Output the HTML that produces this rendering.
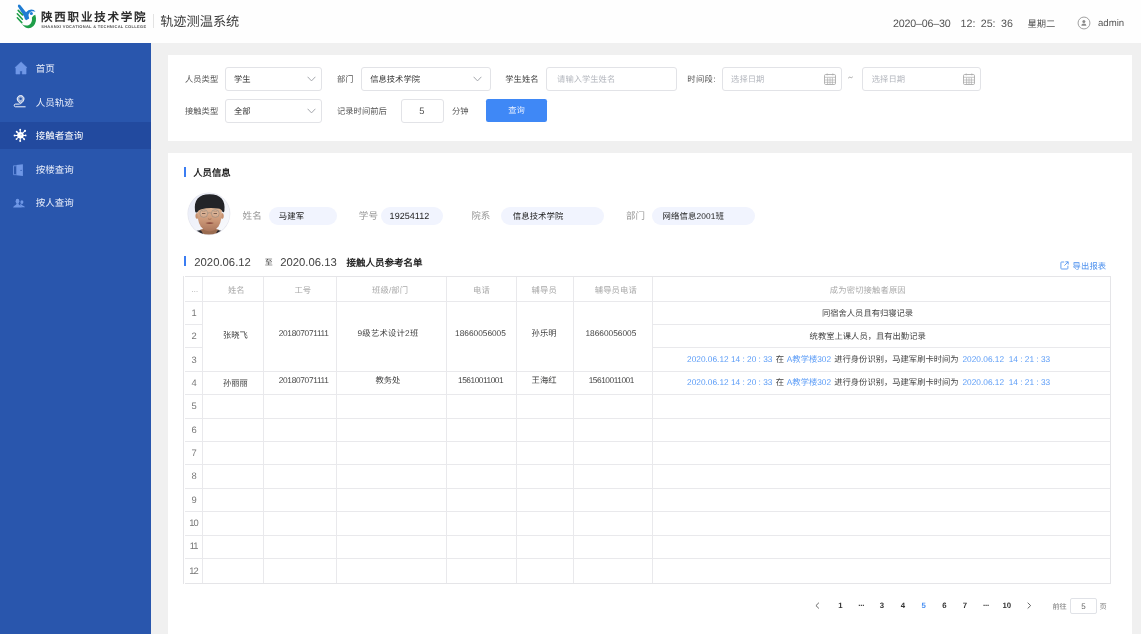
<!DOCTYPE html>
<html lang="zh-CN">
<head>
<meta charset="utf-8">
<title>轨迹测温系统</title>
<style>
*{box-sizing:border-box;margin:0;padding:0}
html,body{width:1141px;height:634px;overflow:hidden;background:#f0f0f0;font-family:"Liberation Sans",sans-serif;color:#333;text-rendering:geometricPrecision}
.abs,.abs *{position:absolute}
.t{position:absolute;white-space:nowrap;line-height:1;}
/* header */
#hd{position:absolute;left:0;top:0;width:1141px;height:43px;background:#fefefe}
/* sidebar */
#sb{position:absolute;left:0;top:43px;width:151px;height:591px;background:#2956ad}
#sb .act{position:absolute;left:0;top:79px;width:151px;height:27.3px;background:#224a9f}
#sb .t{font-size:9.5px;color:#e9eefa;left:35.8px}
/* panels */
.panel{position:absolute;background:#fff;will-change:transform}
#hd,#sb{will-change:transform}
.lbl{font-size:8.3px;color:#555}
.inp{position:absolute;height:24px;border:1px solid #e2e3e7;border-radius:3px;background:#fff}
.inp .t{font-size:8.3px;top:7.3px}
.ph{color:#b5b8bf}
.chev{position:absolute;top:8.6px;width:9px;height:6px}
.cal{position:absolute;top:5.4px;width:12px;height:12px}
.gl{font-size:9.5px;color:#999;letter-spacing:.1px}
.pill{position:absolute;height:18.6px;border-radius:9.3px;background:#f1f4fe}
.pill .t{font-size:8.4px;color:#222;top:5px;letter-spacing:.1px}
.bar{position:absolute;width:2px;height:10.6px;background:#3b7df2}
/* table */
#tb{position:absolute;border:1px solid #e5e5e8}
#tb i{position:absolute;background:#e9e9ec;display:block}
.th{font-size:8.3px;color:#aaa;letter-spacing:.15px}
.td{font-size:8.3px;color:#444;letter-spacing:0}
.num{font-size:9.4px;color:#777}
.lk{color:#5b9cf7}
.pg{font-size:7.8px;font-weight:bold;color:#333}
</style>
</head>
<body>
<!-- HEADER -->
<div id="hd">
  <svg id="logo" style="position:absolute;left:12px;top:0;width:50px;height:36px" viewBox="0 0 50 36">
<path d="M6.8 4.5 Q7.6 4.4 8.2 5.1 L14 12.3 Q17 8.6 21.8 10 L23.5 11.7 Q19.6 10.5 17.7 12.5 Q16.1 14.2 16.6 16 L17.2 18.4 L14.2 20.3 Q12.3 18.6 12.1 16.4 L5.9 6.5 Q5.6 5 6.8 4.5Z" fill="#1f7cd3"/>
<circle cx="19.35" cy="13.5" r="1.55" fill="#1f7cd3"/>
<path d="M6.2 10.4L10.5 14.9M5.3 13.8L10.4 19.2M5.3 17.8L9.8 22.6" stroke="#1e9e48" stroke-width="1.55" stroke-linecap="round" fill="none"/>
<path d="M9.8 23.9 Q13.6 26.6 17 24.9 Q20.6 22.8 19.9 17.4 Q21 15.3 23.3 14.8 Q25.4 21.6 21.5 25.9 Q15.6 31.2 9.8 23.9Z" fill="#1e9e48"/>
</svg>
  <div class="t" style="left:41px;top:12.8px;font-size:11.5px;font-weight:bold;color:#2b2b2b;letter-spacing:1.8px">陕西职业技术学院</div>
  <div class="t" style="left:41.2px;top:24.8px;font-size:4px;font-weight:bold;color:#555;letter-spacing:.3px;transform-origin:0 0">SHAANXI VOCATIONAL &amp; TECHNICAL COLLEGE</div>
  <div style="position:absolute;left:152.6px;top:14px;width:1px;height:14px;background:#e3e3e3"></div>
  <div class="t" style="left:160.2px;top:14.6px;font-size:13.2px;color:#3d3d3d">轨迹测温系统</div>
  <div class="t" style="left:893px;top:18.6px;font-size:10.7px;color:#555;letter-spacing:-.2px">2020–06–30</div>
  <div class="t" style="left:960.5px;top:18.6px;font-size:10.7px;color:#555;word-spacing:2.4px">12: 25: 36</div>
  <div class="t" style="left:1027.5px;top:19.6px;font-size:9.3px;color:#555">星期二</div>
  <svg id="usr" style="position:absolute;left:1076.6px;top:16px;width:14px;height:14px" viewBox="0 0 14 14">
<circle cx="7" cy="7" r="5.95" fill="none" stroke="#8f8f8f" stroke-width=".85"/>
<circle cx="6.85" cy="5.5" r="1.5" fill="#8a8a8a"/>
<path d="M4.3 9.8 Q4.3 7.6 6.85 7.6 Q9.4 7.6 9.4 9.8Z" fill="#8a8a8a"/>
</svg>
  <div class="t" style="left:1098px;top:18.8px;font-size:9.6px;color:#555">admin</div>
</div>

<!-- SIDEBAR -->
<div id="sb">
  <div class="act"></div>
<svg style="position:absolute;left:0;top:0;width:40px;height:180px" viewBox="0 43 40 180">
<!-- home -->
<path d="M21.1 61.9 L27.1 67.7 L26.1 67.7 L26.1 74.1 L22.2 74.1 L22.2 70.9 L19.9 70.9 L19.9 74.1 L15.9 74.1 L15.9 67.7 L14.9 67.7 Z" fill="#6f97e6" stroke="#6f97e6" stroke-width=".5" stroke-linejoin="round"/>
<!-- location -->
<path d="M20.6 95.6 C22.6 95.6 24 97 24 98.9 C24 100.8 22.1 102.5 20.6 103.7 C19.1 102.5 17.2 100.8 17.2 98.9 C17.2 97 18.6 95.6 20.6 95.6Z" fill="rgba(255,255,255,.55)" stroke="#fff" stroke-width="1"/>
<circle cx="20.6" cy="98.7" r="1.25" fill="#2956ad"/>
<path d="M19.3 104.1 H15.5 C13.8 104.1 13.8 106.8 15.5 106.8 H25.2" fill="none" stroke="#fff" stroke-width=".95" stroke-linecap="round"/>
<!-- virus -->
<g fill="#fff" stroke="#fff">
<circle cx="20.4" cy="135.2" r="3.25" stroke="none"/>
<path d="M20.4 135.2L20.2 129.8M20.4 135.2L24.8 131.1M20.4 135.2L25.5 135.4M20.4 135.2L24.1 139.2M20.4 135.2L20.2 140.9M20.4 135.2L16.6 139M20.4 135.2L14.7 135.6M20.4 135.2L16.8 131.8" stroke-width="1.05" fill="none"/>
<circle cx="20.2" cy="129.7" r=".95" stroke="none"/><circle cx="25" cy="130.9" r="1.05" stroke="none"/><circle cx="25.6" cy="135.4" r=".9" stroke="none"/><circle cx="24.2" cy="139.3" r=".95" stroke="none"/><circle cx="20.2" cy="140.9" r="1" stroke="none"/><circle cx="16.5" cy="139.1" r=".95" stroke="none"/><circle cx="14.6" cy="135.6" r="1" stroke="none"/><circle cx="16.7" cy="131.7" r=".95" stroke="none"/>
</g>
<circle cx="21.1" cy="134.7" r=".55" fill="#5577bb"/>
<!-- door -->
<path d="M16.3 165.8 H13.5 V174.7 H16.3" fill="none" stroke="#6f97e6" stroke-width=".8"/>
<path d="M16.3 164.9 L22.9 164.2 V176.1 L16.3 175.3Z" fill="#6f97e6"/>
<circle cx="21.1" cy="170.4" r=".6" fill="#2956ad"/>
<!-- people -->
<g fill="#6f97e6">
<ellipse cx="21.9" cy="202.1" rx="1.5" ry="1.95"/>
<path d="M21 203.6 Q21.2 205 22.6 205.5 Q24.6 206 25 207.3 H21.6 Q21 205.6 19.8 205.2Z"/>
<ellipse cx="17.5" cy="201.2" rx="1.85" ry="2.45"/>
<path d="M16.5 203.2 H18.5 Q18.4 204.8 19.8 205.3 Q21.6 205.9 21.8 207.6 H13.1 Q13.4 205.9 15.2 205.3 Q16.6 204.8 16.5 203.2Z"/>
</g>
</svg>
  <div class="t" style="top:22.0px">首页</div>
  <div class="t" style="top:55.6px">人员轨迹</div>
  <div class="t" style="top:89.2px;color:#fff">接触者查询</div>
  <div class="t" style="top:122.9px">按楼查询</div>
  <div class="t" style="top:156.4px">按人查询</div>
</div>

<!-- FILTER PANEL -->
<div class="panel" style="left:168px;top:55.3px;width:963.6px;height:85.7px">
<div class="t lbl" style="left:17.0px;top:19.9px;">人员类型</div>
<div class="inp" style="left:57.3px;top:11.9px;width:96.6px"><div class="t" style="left:7.6px;color:#333">学生</div><svg class="chev" style="left:80.5px" viewBox="0 0 9 6"><path d="M0.6 0.8 L4.5 4.9 L8.4 0.8" fill="none" stroke="#9a9da3" stroke-width="0.9"/></svg></div>
<div class="t lbl" style="left:169.0px;top:19.9px;">部门</div>
<div class="inp" style="left:193.0px;top:11.9px;width:130.0px"><div class="t" style="left:8.2px;color:#333">信息技术学院</div><svg class="chev" style="left:111px" viewBox="0 0 9 6"><path d="M0.6 0.8 L4.5 4.9 L8.4 0.8" fill="none" stroke="#9a9da3" stroke-width="0.9"/></svg></div>
<div class="t lbl" style="left:337.3px;top:19.9px;color:#444">学生姓名</div>
<div class="inp" style="left:378.3px;top:11.9px;width:130.4px"><div class="t ph" style="left:9.8px">请输入学生姓名</div></div>
<div class="t lbl" style="left:519.3px;top:19.9px;"><span style="letter-spacing:.35px">时间段:</span></div>
<div class="inp" style="left:553.5px;top:11.9px;width:120.0px"><div class="t ph" style="left:8.6px">选择日期</div><svg class="cal" style="left:101.6px" viewBox="0 0 12 12"><rect x="0.5" y="1.5" width="11" height="10" rx="1.2" fill="none" stroke="#a2a2a2" stroke-width="0.8"/><path d="M0.5 4.3H11.5M3.2 0.4V2.4M8.8 0.4V2.4M0.8 7H11.2M0.8 9.3H11.2M3.6 4.5V11.3M6 4.5V11.3M8.4 4.5V11.3" fill="none" stroke="#a8a8a8" stroke-width="0.65"/></svg></div>
<svg style="position:absolute;left:679.6px;top:21.1px;width:5px;height:3px" viewBox="0 0 5 3"><path d="M.4 1.9 Q1.3 .5 2.4 1.4 T4.5 1.1" fill="none" stroke="#8a8a8a" stroke-width=".75" stroke-linecap="round"/></svg>
<div class="inp" style="left:693.7px;top:11.9px;width:119.2px"><div class="t ph" style="left:9.1px">选择日期</div><svg class="cal" style="left:100.3px" viewBox="0 0 12 12"><rect x="0.5" y="1.5" width="11" height="10" rx="1.2" fill="none" stroke="#a2a2a2" stroke-width="0.8"/><path d="M0.5 4.3H11.5M3.2 0.4V2.4M8.8 0.4V2.4M0.8 7H11.2M0.8 9.3H11.2M3.6 4.5V11.3M6 4.5V11.3M8.4 4.5V11.3" fill="none" stroke="#a8a8a8" stroke-width="0.65"/></svg></div>
<div class="t lbl" style="left:17.0px;top:52.0px;">接触类型</div>
<div class="inp" style="left:57.3px;top:43.9px;width:96.6px"><div class="t" style="left:7.6px;color:#333">全部</div><svg class="chev" style="left:80.5px" viewBox="0 0 9 6"><path d="M0.6 0.8 L4.5 4.9 L8.4 0.8" fill="none" stroke="#9a9da3" stroke-width="0.9"/></svg></div>
<div class="t lbl" style="left:169.0px;top:52.0px;">记录时间前后</div>
<div class="inp" style="left:233.2px;top:43.9px;width:43.0px"><div class="t" style="left:17px;top:6.2px;font-size:9.4px;color:#555">5</div></div>
<div class="t lbl" style="left:284.0px;top:52.0px;">分钟</div>
<div style="position:absolute;left:318.2px;top:43.9px;width:60.4px;height:22.8px;border-radius:2.2px;background:#3f88f6"><div class="t" style="left:22px;top:7px;font-size:8.3px;color:#dfeaff">查询</div></div>
</div>

<!-- MAIN PANEL -->
<div class="panel" style="left:168px;top:153px;width:963.6px;height:481px">
<div class="bar" style="left:15.6px;top:13.8px"></div>
<div class="t " style="left:25.2px;top:15.4px;font-size:9.4px;font-weight:bold;color:#222;letter-spacing:.0px">人员信息</div>
<svg id="av" style="position:absolute;left:12px;top:33px;width:60px;height:56px" viewBox="0 0 60 56">
<defs><clipPath id="avc"><circle cx="28.9" cy="27.8" r="20.8"/></clipPath>
<linearGradient id="skin" x1="0" y1="0" x2="0" y2="1"><stop offset="0" stop-color="#e0b999"/><stop offset=".55" stop-color="#cc9878"/><stop offset="1" stop-color="#a9745a"/></linearGradient>
<linearGradient id="avbg" x1="0" y1="0" x2="1" y2="1"><stop offset="0" stop-color="#e9ecf8"/><stop offset="1" stop-color="#f9fafc"/></linearGradient></defs>
<circle cx="28.9" cy="27.8" r="21.4" fill="#e4e5ec"/>
<circle cx="28.9" cy="27.8" r="20.8" fill="url(#avbg)"/>
<g clip-path="url(#avc)">
<path d="M20.5 43.5 Q29.5 41.5 38.5 43.5 L41 50 H18Z" fill="#9a6c50"/>
<path d="M14 46.4 Q17.5 43.8 21 44.4 L24.5 50 H13Z M44 46.4 Q40.5 43.8 37.6 44.4 L34.5 50 H45Z" fill="#262830"/>
<ellipse cx="17" cy="30" rx="1.6" ry="2.9" fill="#c6906f"/><ellipse cx="42.2" cy="30" rx="1.6" ry="2.9" fill="#c6906f"/>
<path d="M17.4 23 Q17 35 20.6 40.2 Q24.6 45.4 29.6 45.4 Q34.6 45.4 38.6 40.2 Q42.2 35 41.8 23 Q30 17 17.4 23Z" fill="url(#skin)"/>
<path d="M15 25 Q13 8.4 29.6 8.2 Q46.2 8.4 44.4 25 Q44 26.8 42.6 26 Q41.4 22.8 38 22.6 Q29 21.4 21.4 23.2 Q18.6 23.8 17 26.4 Q15.4 27.2 15 25Z" fill="#232428"/>
<circle cx="23.8" cy="27.5" r="3.9" fill="rgba(255,255,255,.1)" stroke="#8f877f" stroke-width=".55"/>
<circle cx="35.3" cy="27.5" r="3.9" fill="rgba(255,255,255,.1)" stroke="#8f877f" stroke-width=".55"/>
<path d="M27.7 27.1 Q29.6 26.3 31.4 27.1" fill="none" stroke="#8f877f" stroke-width=".5"/>
<path d="M22 27.5 h3.4 M33.6 27.5 h3.4" stroke="#3a2a22" stroke-width=".8" opacity=".75"/>
<path d="M21.6 25.2 h4 M33.4 25.2 h4" stroke="#3a2a22" stroke-width=".5" opacity=".45"/>
<path d="M28 32.8 Q29.7 34 31.4 32.8" fill="none" stroke="#a06c4e" stroke-width=".8"/>
<path d="M25.4 36.9 Q29.7 35.7 34 36.9 Q29.7 39.2 25.4 36.9Z" fill="#8a4b3e"/>
</g>
</svg>
<div class="t gl" style="left:74.6px;top:59.4px;">姓名</div>
<div class="pill" style="left:101.4px;top:53.6px;width:67.6px"><div class="t" style="left:9.4px">马建军</div></div>
<div class="t gl" style="left:190.8px;top:59.4px;">学号</div>
<div class="pill" style="left:213.4px;top:53.6px;width:62px"><div class="t" style="left:8.2px;top:5.3px;font-size:9px;letter-spacing:.05px">19254112</div></div>
<div class="t gl" style="left:303.2px;top:59.4px;">院系</div>
<div class="pill" style="left:333.2px;top:53.6px;width:103px"><div class="t" style="left:11.5px">信息技术学院</div></div>
<div class="t gl" style="left:458.0px;top:59.4px;">部门</div>
<div class="pill" style="left:484.4px;top:53.6px;width:103px"><div class="t" style="left:10.2px">网络信息2001班</div></div>
<div class="bar" style="left:15.6px;top:102.9px"></div>
<div class="t " style="left:26.3px;top:104.8px;font-size:11.3px;color:#444">2020.06.12</div>
<div class="t " style="left:96.8px;top:105.8px;font-size:8px;color:#333">至</div>
<div class="t " style="left:112.2px;top:104.8px;font-size:11.3px;color:#444">2020.06.13</div>
<div class="t " style="left:178.4px;top:106.2px;font-size:9.5px;font-weight:bold;color:#222">接触人员参考名单</div>
<svg style="position:absolute;left:892.0px;top:108.2px;width:9px;height:9px" viewBox="0 0 9 9"><path d="M4.2 1H1.6C1.2 1 .9 1.3 .9 1.7V7.3C.9 7.7 1.2 8 1.6 8H7.2C7.6 8 7.9 7.7 7.9 7.3V4.8M5.4 .8H8.2V3.6M8.1 .9L4.4 4.6" fill="none" stroke="#4a8fee" stroke-width=".85"/></svg>
<div class="t " style="left:904.6px;top:109.0px;font-size:8.3px;color:#4a8fee;letter-spacing:.12px">导出报表</div>
<div id="tb" style="left:16px;top:123px;width:927px;height:308px"><b style="position:absolute;left:-2px;top:-1px;width:2px;height:308px;background:#fff;border-left:1px solid #e5e5e8"></b>
<i style="left:17px;top:0;width:1px;height:100%"></i><i style="left:78px;top:0;width:1px;height:100%"></i><i style="left:151px;top:0;width:1px;height:100%"></i><i style="left:261px;top:0;width:1px;height:100%"></i><i style="left:331px;top:0;width:1px;height:100%"></i><i style="left:388px;top:0;width:1px;height:100%"></i><i style="left:467px;top:0;width:1px;height:100%"></i>
<i style="left:0;top:24px;width:100%;height:1px"></i><i style="left:0;top:47px;width:17px;height:1px"></i><i style="left:467px;top:47px;right:0;height:1px"></i><i style="left:0;top:70px;width:17px;height:1px"></i><i style="left:467px;top:70px;right:0;height:1px"></i><i style="left:0;top:94px;width:100%;height:1px"></i><i style="left:0;top:117px;width:100%;height:1px"></i><i style="left:0;top:141px;width:100%;height:1px"></i><i style="left:0;top:164px;width:100%;height:1px"></i><i style="left:0;top:187px;width:100%;height:1px"></i><i style="left:0;top:211px;width:100%;height:1px"></i><i style="left:0;top:234px;width:100%;height:1px"></i><i style="left:0;top:258px;width:100%;height:1px"></i><i style="left:0;top:281px;width:100%;height:1px"></i>
<div class="t th" style="left:6.6px;top:9.2px;font-size:7.4px;letter-spacing:.1px;color:#999">...</div>
<div class="t th" style="left:42.9px;top:8.6px;">姓名</div>
<div class="t th" style="left:109.4px;top:8.6px;">工号</div>
<div class="t th" style="left:187.0px;top:8.6px;">班级/部门</div>
<div class="t th" style="left:288.0px;top:8.6px;">电话</div>
<div class="t th" style="left:346.6px;top:8.6px;">辅导员</div>
<div class="t th" style="left:409.7px;top:8.6px;">辅导员电话</div>
<div class="t th" style="left:644.8px;top:9.2px;">成为密切接触者原因</div>
<div class="t num" style="left:0;width:18px;text-align:center;top:30.9px;">1</div>
<div class="t num" style="left:0;width:18px;text-align:center;top:54.2px;">2</div>
<div class="t num" style="left:0;width:18px;text-align:center;top:77.5px;">3</div>
<div class="t num" style="left:0;width:18px;text-align:center;top:100.9px;">4</div>
<div class="t num" style="left:0;width:18px;text-align:center;top:124.2px;">5</div>
<div class="t num" style="left:0;width:18px;text-align:center;top:147.5px;">6</div>
<div class="t num" style="left:0;width:18px;text-align:center;top:170.8px;">7</div>
<div class="t num" style="left:0;width:18px;text-align:center;top:194.2px;">8</div>
<div class="t num" style="left:0;width:18px;text-align:center;top:217.5px;">9</div>
<div class="t num" style="left:0;width:18px;text-align:center;top:240.8px;letter-spacing:-1px;text-indent:-1px;">10</div>
<div class="t num" style="left:0;width:18px;text-align:center;top:264.2px;letter-spacing:-1px;text-indent:-1px;">11</div>
<div class="t num" style="left:0;width:18px;text-align:center;top:288.6px;letter-spacing:-1px;text-indent:-1px;">12</div>
<div class="t td" style="left:37.9px;top:53.8px;">张晓飞</div>
<div class="t td" style="left:93.7px;top:51.6px;letter-spacing:-.3px">201807071111</div>
<div class="t td" style="left:172.5px;top:51.6px;letter-spacing:.25px">9级艺术设计2班</div>
<div class="t td" style="left:270.1px;top:51.6px;">18660056005</div>
<div class="t td" style="left:346.6px;top:51.6px;">孙乐明</div>
<div class="t td" style="left:400.5px;top:51.6px;">18660056005</div>
<div class="t td" style="left:37.9px;top:101.6px;">孙丽丽</div>
<div class="t td" style="left:93.7px;top:99.2px;letter-spacing:-.3px">201807071111</div>
<div class="t td" style="left:190.4px;top:99.2px;">教务处</div>
<div class="t td" style="left:273.0px;top:99.2px;letter-spacing:-.45px">15610011001</div>
<div class="t td" style="left:346.6px;top:99.2px;">王海红</div>
<div class="t td" style="left:403.7px;top:99.2px;letter-spacing:-.45px">15610011001</div>
<div class="t td" style="left:636.9px;top:31.8px;">同宿舍人员且有归寝记录</div>
<div class="t td" style="left:624.6px;top:55.1px;">统教室上课人员，且有出勤记录</div>
<div class="t td lk" style="left:502.1px;top:77.6px;">2020.06.12 14 : 20 : 33</div>
<div class="t td" style="left:590.8px;top:77.6px;">在</div>
<div class="t td lk" style="left:601.8px;top:77.6px;">A教学楼302</div>
<div class="t td" style="left:649.2px;top:77.6px;">进行身份识别，马建军刷卡时间为</div>
<div class="t td lk" style="left:777.5px;top:77.6px;">2020.06.12&nbsp; 14 : 21 : 33</div>
<div class="t td lk" style="left:502.1px;top:100.9px;">2020.06.12 14 : 20 : 33</div>
<div class="t td" style="left:590.8px;top:100.9px;">在</div>
<div class="t td lk" style="left:601.8px;top:100.9px;">A教学楼302</div>
<div class="t td" style="left:649.2px;top:100.9px;">进行身份识别，马建军刷卡时间为</div>
<div class="t td lk" style="left:777.5px;top:100.9px;">2020.06.12&nbsp; 14 : 21 : 33</div>
</div>
<svg style="position:absolute;left:647.2px;top:449.4px;width:4.6px;height:7.2px" viewBox="0 0 5 8"><path d="M4.3 .8L1 4L4.3 7.2" fill="none" stroke="#444" stroke-width=".9"/></svg>
<div class="t pg" style="left:662.3px;width:20px;text-align:center;top:449.4px;">1</div>
<div class="t pg" style="left:683.3px;width:20px;text-align:center;top:449.4px;letter-spacing:-.6px">···</div>
<div class="t pg" style="left:703.9px;width:20px;text-align:center;top:449.4px;">3</div>
<div class="t pg" style="left:724.8px;width:20px;text-align:center;top:449.4px;">4</div>
<div class="t pg" style="left:745.7px;width:20px;text-align:center;top:449.4px;color:#4a90f3">5</div>
<div class="t pg" style="left:766.4px;width:20px;text-align:center;top:449.4px;">6</div>
<div class="t pg" style="left:787.0px;width:20px;text-align:center;top:449.4px;">7</div>
<div class="t pg" style="left:807.9px;width:20px;text-align:center;top:449.4px;letter-spacing:-.6px">···</div>
<div class="t pg" style="left:828.8px;width:20px;text-align:center;top:449.4px;">10</div>
<svg style="position:absolute;left:858.8px;top:449.4px;width:4.6px;height:7.2px" viewBox="0 0 5 8"><path d="M.7 .8L4 4L.7 7.2" fill="none" stroke="#444" stroke-width=".9"/></svg>
<div class="t" style="left:884.4px;top:449.9px;font-size:7.2px;color:#777">前往</div>
<div style="position:absolute;left:902.4px;top:445.4px;width:26.2px;height:16px;border:1px solid #e0e2e7;border-radius:2px"><div class="t" style="left:0;width:24px;text-align:center;top:3.4px;font-size:8px;color:#666">5</div></div>
<div class="t" style="left:931.4px;top:449.9px;font-size:7.2px;color:#777">页</div>
</div>

</body>
</html>
